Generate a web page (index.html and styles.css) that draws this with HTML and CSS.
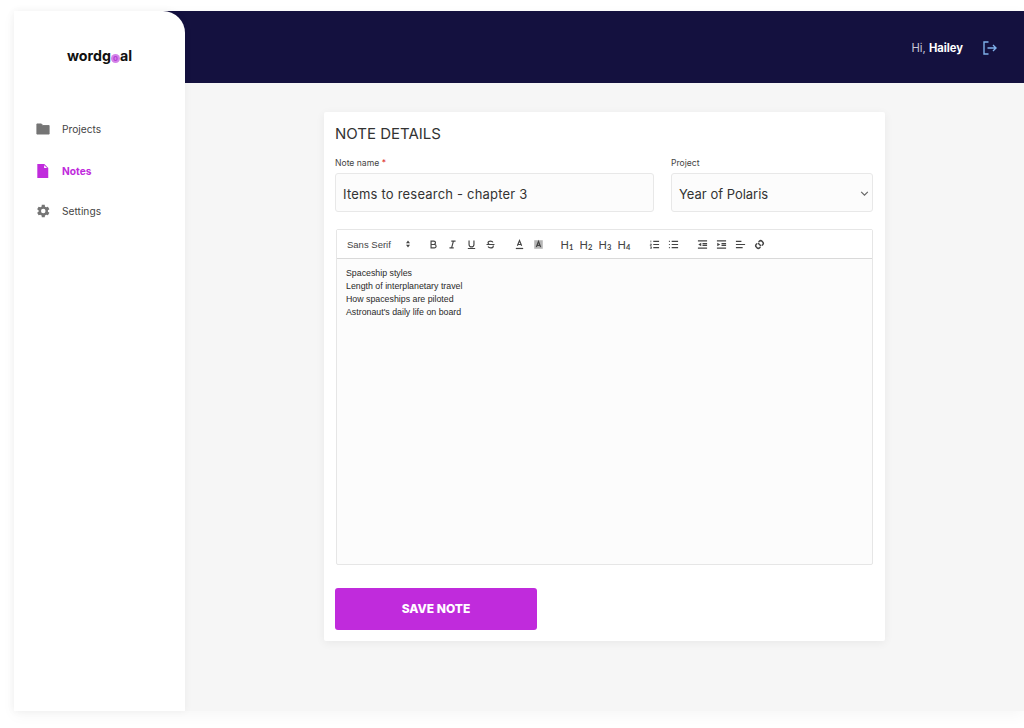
FILE: index.html
```html
<!DOCTYPE html>
<html lang="en">
<head>
<meta charset="utf-8">
<title>Note details</title>
<link rel="stylesheet" href="styles.css">
</head>
<body>
<div class="app">
  <aside class="sidebar">
    <div class="logo">wordg<span class="logo-o">o</span>al</div>
    <nav class="nav">
      <a class="nav-item">
        <svg class="nav-icon" viewBox="0 0 16 16"><path d="M1 2.2h5.2L7.8 4H15v9.8H1z" fill="#757575" stroke="#757575" stroke-linejoin="round"/></svg>
        <span>Projects</span>
      </a>
      <a class="nav-item active">
        <svg class="nav-icon" viewBox="0 0 16 16"><path d="M1.5 0H9.5L14 4.5V16H1.5zM9.3 1.3V4.7H12.7z" fill="#c02bdc" fill-rule="evenodd"/></svg>
        <span>Notes</span>
      </a>
      <a class="nav-item">
        <svg class="nav-icon nav-icon-gear" viewBox="0 0 24 24"><path d="M19.4 13a7.6 7.6 0 0 0 0-2l2.2-1.7-2.2-3.8-2.6 1a7.5 7.5 0 0 0-1.8-1L14.6 2.7h-4.4L9.8 5.5a7.5 7.5 0 0 0-1.8 1l-2.6-1-2.2 3.8L5.4 11a7.6 7.6 0 0 0 0 2l-2.2 1.7 2.2 3.8 2.6-1a7.5 7.5 0 0 0 1.8 1l.4 2.8h4.4l.4-2.8a7.5 7.5 0 0 0 1.8-1l2.6 1 2.2-3.8zM12.4 15.4a3.4 3.4 0 1 1 0-6.8 3.4 3.4 0 0 1 0 6.8z" fill="#757575" fill-rule="evenodd"/></svg>
        <span>Settings</span>
      </a>
    </nav>
  </aside>
  <div class="content">
    <header class="topbar">
      <span class="greeting">Hi, <b>Hailey</b></span>
      <svg class="logout" viewBox="0 0 14 14" fill="none" stroke="#7fb0ea" stroke-width="1.4"><path d="M5.5 1H1v12h4.5"/><path d="M4.5 7H13M10 4l3 3-3 3"/></svg>
    </header>
    <main class="main">
      <section class="card">
        <h1 class="title">NOTE DETAILS</h1>
        <div class="fields">
          <div class="field field-name">
            <div class="label">Note name <span class="req">*</span></div>
            <div class="input input-name">Items to research - chapter 3</div>
          </div>
          <div class="field field-project">
            <div class="label">Project</div>
            <div class="input select">
              <span>Year of Polaris</span>
              <svg class="chev" viewBox="0 0 10 6" fill="none" stroke="#666" stroke-width="1.4"><path d="M1 1l4 4 4-4"/></svg>
            </div>
          </div>
        </div>
        <div class="editor">
          <div class="toolbar">
            <div class="picker">
              <span>Sans Serif</span>
              <svg class="picker-arrows" viewBox="0 0 6 10"><path d="M3 0.5L5.5 4H0.5zM3 9.5L0.5 6H5.5z" fill="#444"/></svg>
            </div>
            <div class="group">
              <button class="tool"><svg viewBox="0 0 18 18"><path d="M5 3.5h4.5a2.7 2.7 0 0 1 0 5.5H5zM5 9h5.5a2.7 2.7 0 0 1 0 5.5H5z"/></svg></button>
              <button class="tool"><svg viewBox="0 0 18 18"><path d="M7 3.5h7M4 14.5h7M7.5 14.5l3-11"/></svg></button>
              <button class="tool"><svg viewBox="0 0 18 18"><path d="M5 2.5v6.5a4 4 0 0 0 8 0V2.5M3 15.5h12"/></svg></button>
              <button class="tool"><svg viewBox="0 0 18 18"><path d="M2.5 9h13M13 5.5C12.5 4.2 11 3.5 9 3.5c-2.2 0-4 1-4 2.8 0 1.2.8 2.1 2 2.7M13.2 10.5c.2.4.3.8.3 1.2 0 1.8-2 2.8-4.3 2.8-2 0-3.600-.8-4.200-2.100"/></svg></button>
            </div>
            <div class="group">
              <button class="tool"><svg viewBox="0 0 18 18"><path d="M3 15.500h12" stroke-width="2"/><path d="M5.500 11L9 2.500l3.500 8.500M6.400 9h5.200"/></svg></button>
              <button class="tool"><svg viewBox="0 0 18 18"><rect x="2" y="2" width="14" height="14" fill="#b5b5b5" stroke="none"/><path d="M5.500 13L9 4l3.500 9M6.400 10.500h5.200"/></svg></button>
            </div>
            <div class="group">
              <button class="tool tool-h">H<sub>1</sub></button>
              <button class="tool tool-h">H<sub>2</sub></button>
              <button class="tool tool-h">H<sub>3</sub></button>
              <button class="tool tool-h">H<sub>4</sub></button>
            </div>
            <div class="group group-list">
              <button class="tool"><svg viewBox="0 0 18 18"><path d="M7 4h9.500M7 9h9.500M7 14h9.500"/><path d="M3 2.500v3M2 8.200h2v1.300H2v1.200h2M2 12.700h2v2.800H2M2.400 14H4" stroke-width="1.100"/></svg></button>
              <button class="tool"><svg viewBox="0 0 18 18"><path d="M6 4h10.500M6 9h10.500M6 14h10.500M1.500 4h1.500M1.500 9h1.500M1.500 14h1.500"/></svg></button>
            </div>
            <div class="group">
              <button class="tool"><svg viewBox="0 0 18 18"><path d="M1.500 3h15M9 7.500h7.500M9 10.500h7.500M1.500 15h15"/><path d="M7 6L2 9l5 3z" fill="#444" stroke="none"/></svg></button>
              <button class="tool"><svg viewBox="0 0 18 18"><path d="M1.500 3h15M9 7.500h7.500M9 10.500h7.500M1.500 15h15"/><path d="M2 6l5 3-5 3z" fill="#444" stroke="none"/></svg></button>
              <button class="tool"><svg viewBox="0 0 18 18"><path d="M1.500 4h9M1.500 9h15M1.500 14h11"/></svg></button>
              <button class="tool tool-link"><svg viewBox="0 0 18 18"><path d="M7.500 5l1.200-1.200a3.200 3.200 0 0 1 4.500 0l1 1a3.200 3.200 0 0 1 0 4.500L13 10.500M10.500 13l-1.200 1.200a3.200 3.200 0 0 1-4.500 0l-1-1a3.200 3.200 0 0 1 0-4.500L5 7.500M6.500 6.500l5 5"/></svg></button>
            </div>
          </div>
          <div class="editor-body">
            <p>Spaceship styles</p>
            <p>Length of interplanetary travel</p>
            <p>How spaceships are piloted</p>
            <p>Astronaut's daily life on board</p>
          </div>
        </div>
        <button class="save">SAVE NOTE</button>
      </section>
    </main>
  </div>
</div>
</body>
</html>
```

FILE: styles.css
```css
* { box-sizing: border-box; }
html, body { margin: 0; height: 100%; background: #fff; overflow: hidden; }
body { font-family: "Inter", "Liberation Sans", sans-serif; color: #333; padding: 11px 0 0 14px; }

.app {
  display: flex;
  height: 700px;
  background: linear-gradient(#14113f 72px, #f6f6f6 72px);
  box-shadow: 0 4px 14px rgba(0,0,0,.04);
}

.sidebar {
  width: 171px;
  flex: none;
  background: #fff;
  border-top-right-radius: 22px;
  box-shadow: 0 0 8px rgba(0,0,0,.05);
  display: flex;
  flex-direction: column;
}
.logo {
  margin-top: 36px;
  height: 18px;
  line-height: 18px;
  text-align: center;
  font-weight: 700;
  font-size: 14.2px;
  color: #111;
}
.logo-o {
  display: inline-block;
  width: 9px;
  height: 9px;
  margin: 0;
  border-radius: 50%;
  background: #d483e8;
  color: #b63fd6;
  font-size: 8px;
  line-height: 8px;
  text-align: center;
  vertical-align: 0;
}
.nav { margin-top: 54px; display: flex; flex-direction: column; padding-left: 22px; }
.nav-item {
  display: flex;
  align-items: center;
  height: 20px;
  font-size: 10.2px;
  color: #444;
}
.nav-item.active { margin: 22px 0 19.500px; color: #c02bdc; font-weight: 700; }
.nav-icon { width: 14px; height: 14px; margin-right: 12px; flex: none; }
.nav-icon-gear { width: 16px; height: 16px; margin: 0 11px 0 -1px; }

.content { flex: 1; display: flex; flex-direction: column; min-width: 0; }
.topbar {
  height: 72px;
  flex: none;
  display: flex;
  align-items: center;
  justify-content: flex-end;
  padding-right: 27px;
  padding-top: 2px;
}
.greeting { font-size: 11.2px; color: #c8c8d6; margin-right: 20px; }
.greeting b { color: #fff; font-weight: 700; }
.logout { width: 14px; height: 14px; }

.main { flex: 1; display: flex; justify-content: center; align-items: flex-start; padding-top: 29px; }
.card {
  width: 561px;
  height: 529px;
  background: #fff;
  padding: 11.500px 12px 0 11px;
  box-shadow: 0 2px 10px rgba(0,0,0,.06);
  border-radius: 2px;
}
.title { margin: 0; font-size: 15px; line-height: 20px; font-weight: 400; color: #333; }

.fields { display: flex; gap: 17px; margin-top: 13.500px; }
.field-name { width: 319px; }
.field-project { width: 202px; }
.label { font-size: 8.6px; line-height: 12px; height: 12px; color: #444; margin-bottom: 4px; }
.req { color: #d33; }
.input {
  height: 39px;
  padding: 2px 7px 0;
  display: flex;
  align-items: center;
  background: #fcfcfc;
  border: 1px solid #e8e8e8;
  border-radius: 3px;
  font-size: 13px;
  color: #333;
}
.input-name { letter-spacing: .2px; }
.select { justify-content: space-between; padding-right: 3px; }
.chev { width: 9px; height: 5px; }

.editor {
  margin-top: 17px;
  margin-left: 1px;
  height: 336px;
  border: 1px solid #e6e6e6;
  border-radius: 2px;
  background: #fcfcfc;
  display: flex;
  flex-direction: column;
}
.toolbar {
  height: 29px;
  flex: none;
  display: flex;
  align-items: center;
  background: #fff;
  border-bottom: 1px solid #d9d9d9;
  padding-left: 10px;
}
.picker {
  width: 67px;
  flex: none;
  margin-right: 9.5px;
  display: flex;
  align-items: center;
  justify-content: space-between;
  padding-right: 3px;
  font-family: "Liberation Sans", sans-serif;
  font-size: 9.5px;
  color: #444;
}
.picker-arrows { width: 6px; height: 8px; }
.group { display: flex; margin-right: 10px; }
.group-list { margin-left: 1px; }
.tool {
  width: 19px;
  height: 19px;
  padding: 0;
  border: 0;
  background: none;
  display: flex;
  align-items: center;
  justify-content: center;
  color: #444;
  font-family: "Lato", sans-serif;
}
.tool svg { width: 11px; height: 11px; fill: none; stroke: #444; stroke-width: 1.9; }
.tool-h { display: block; text-align: center; font-size: 11px; line-height: 19px; }
.tool-h sub { font-size: 7.5px; line-height: 0; vertical-align: -1px; font-weight: 700; }
.tool-link svg { stroke-width: 2.4; }

.editor-body {
  flex: 1;
  padding: 8px 9px;
  font-family: "Liberation Sans", sans-serif;
  font-size: 8.8px;
  line-height: 13px;
  color: #2a2a2a;
}
.editor-body p { margin: 0; }

.save {
  margin-top: 23px;
  width: 202px;
  height: 42px;
  padding: 0 0 2px;
  border: 0;
  border-radius: 3px;
  background: #c02bdc;
  color: #fff;
  font-family: "Inter", sans-serif;
  font-weight: 800;
  font-size: 12px;
  display: block;
}
```
